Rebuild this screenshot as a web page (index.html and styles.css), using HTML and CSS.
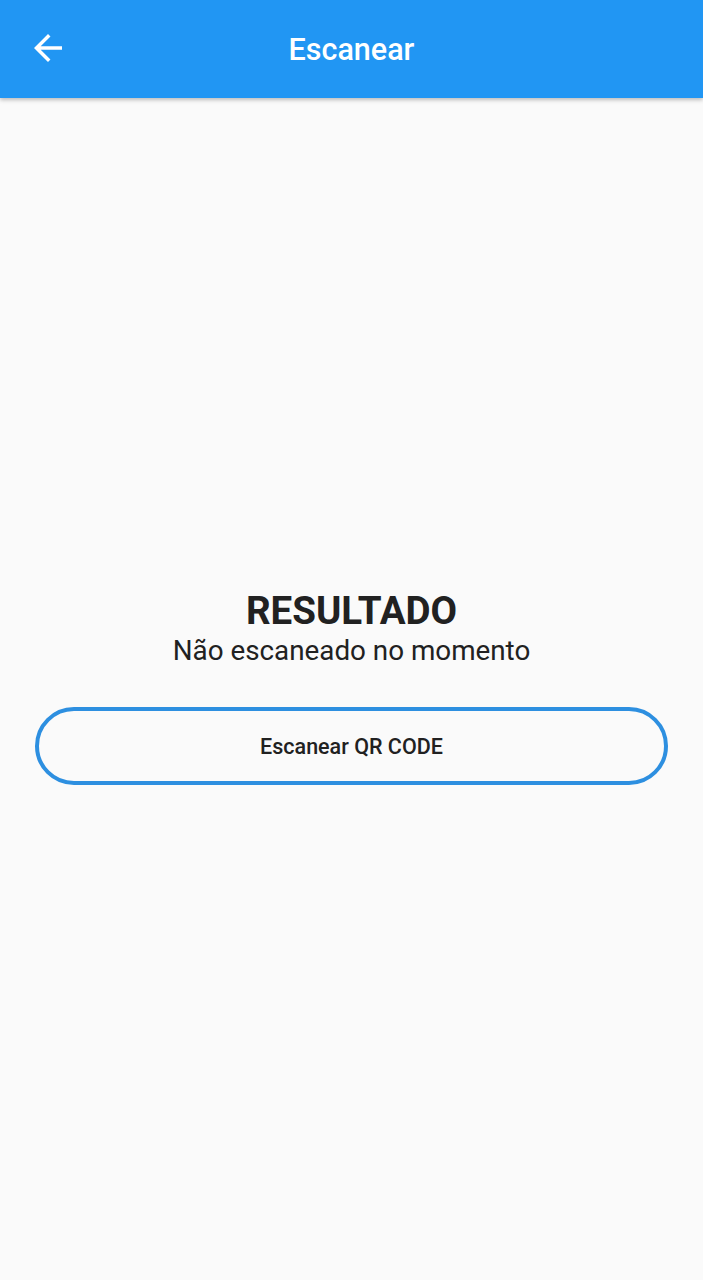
FILE: index.html
```html
<!DOCTYPE html>
<html lang="pt">
<head>
<meta charset="utf-8">
<link rel="stylesheet" href="styles.css">
</head>
<body>
<header class="appbar">
  <button class="back" aria-label="Voltar">
    <svg width="42" height="42" viewBox="0 0 24 24"><path d="M20 11H7.83l5.59-5.59L12 4l-8 8 8 8 1.41-1.41L7.83 13H20v-2z" fill="#fff"/></svg>
  </button>
  <h1 class="title">Escanear</h1>
</header>
<main class="content">
  <h2 class="result">RESULTADO</h2>
  <p class="status">Não escaneado no momento</p>
  <button class="scan">Escanear QR CODE</button>
</main>
</body>
</html>
```
FILE: styles.css
```css
html, body {
  margin: 0;
  padding: 0;
  height: 100%;
}
body {
  background: #fafafa;
  font-family: Roboto, "Liberation Sans", sans-serif;
  display: flex;
  flex-direction: column;
}
.appbar {
  height: 98px;
  flex: none;
  background: #2196f3;
  display: flex;
  align-items: center;
  justify-content: center;
  position: relative;
  box-shadow: 0 2px 4px rgba(0,0,0,0.25);
  z-index: 1;
}
.back {
  position: absolute;
  left: 27px;
  top: 27px;
  border: 0;
  background: none;
  padding: 0;
  width: 42px;
  height: 42px;
}
.back svg { display: block; }
.title {
  margin: 0;
  color: #fff;
  font-size: 30.5px;
  font-weight: 500;
}
.content {
  flex: 1;
  display: flex;
  flex-direction: column;
  align-items: center;
  justify-content: center;
  padding: 0 35px 4px;
}
.result {
  margin: 0;
  font-size: 38.5px;
  font-weight: 700;
  color: #212121;
  line-height: 44px;
}
.status {
  margin: 0;
  font-size: 27.8px;
  color: #212121;
  line-height: 36px;
}
.scan {
  margin-top: 38px;
  align-self: stretch;
  height: 78px;
  border: 4px solid #2d8fe0;
  border-radius: 39px;
  background: #fafafa;
  font-family: Roboto, "Liberation Sans", sans-serif;
  font-size: 21.5px;
  font-weight: 500;
  color: #212121;
}
```
